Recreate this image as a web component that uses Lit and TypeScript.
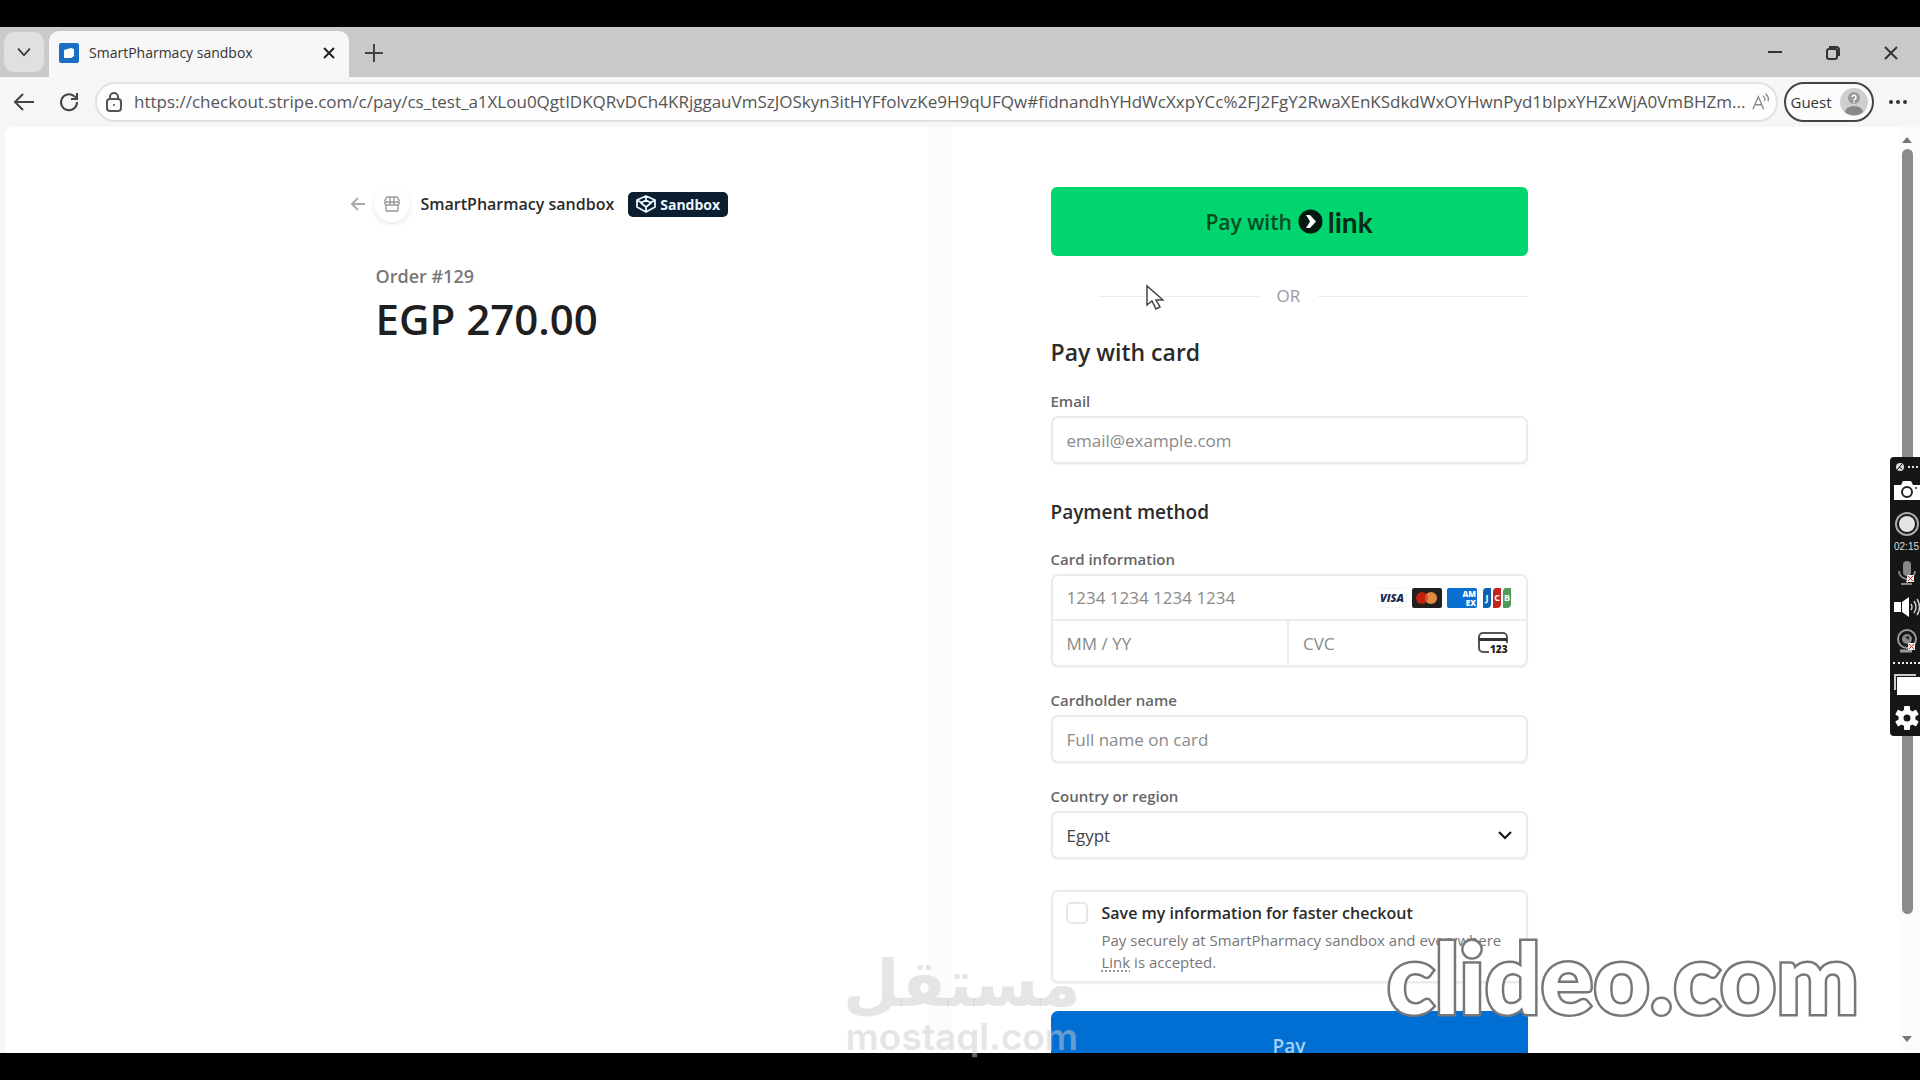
import { LitElement, html, svg, css } from "lit";
import { customElement } from "lit/decorators.js";

const base = css`
  *, *::before, *::after { box-sizing: border-box; }
  svg { display: block; flex: none; }
  button, input, select { font: inherit; color: inherit; margin: 0; }
  button { border: 0; background: none; padding: 0; display: flex; align-items: center; justify-content: center; }
  h1, h2, h3, p { margin: 0; }
`;

@customElement("browser-chrome")
class BrowserChrome extends LitElement {
  static styles = [base, css`
    :host { display: block; color: #333; }
    .tabs { display: flex; align-items: flex-end; height: 50px; padding: 0 0 0 4px; background: #c9c9c9; }
    .list { width: 40px; height: 40px; margin: 0 5px 5px 0; border-radius: 10px; background: #e0e0e0; }
    .tab { display: flex; align-items: center; width: 300px; height: 46px; padding: 0 10px 3px; border-radius: 10px 10px 0 0; background: #f7f7f7; }
    .title { flex: 1; margin-left: 10px; font-size: 14px; line-height: 20px; white-space: nowrap; }
    .plus { width: 50px; height: 46px; padding-bottom: 3px; }
    .window { display: flex; margin-left: auto; height: 46px; padding-bottom: 3px; }
    .window button { width: 58px; }
    .bar { display: flex; align-items: center; height: 50px; padding: 0 12px 1px; background: #f6f6f6; }
    .nav { width: 46px; height: 40px; justify-content: flex-start; }
    .nav.reload { width: 37px; }
    .address { display: flex; align-items: center; flex: 1; min-width: 0; height: 40px; padding: 0 6px 0 8px; border: 2px solid #e2e2e2; border-radius: 20px; background: #fdfdfd; }
    .url { flex: 1; min-width: 0; height: 24px; margin: 0 0 0 11px; padding: 0; border: 0; outline: 0; background: none; font-size: 17px; color: #555; text-overflow: ellipsis; }
    .guest { gap: 8px; height: 40px; width: 90px; margin: 0 14px 0 6px; border: 2px solid #444; border-radius: 20px; background: #fcfcfc; font-size: 15px; }
  `];
  render() {
    return html`
      <div class="tabs">
        <button class="list" aria-label="Tab list"><svg width="16" height="10" viewBox="0 0 18 12" fill="none" stroke="#333" stroke-width="2"><path d="M2 2l7 8 7-8" /></svg></button>
        <div class="tab">
          <svg width="20" height="20" viewBox="0 0 20 20"><rect width="20" height="20" rx="2" fill="#1a6fc4" /><path d="M5 7l7-2 3 1v7l-3 2H5z" fill="#fff" /></svg>
          <span class="title">SmartPharmacy sandbox</span>
          <button aria-label="Close tab"><svg width="20" height="20" viewBox="0 0 20 20" stroke="#222" stroke-width="2"><path d="M5 5l10 10M15 5L5 15" /></svg></button>
        </div>
        <button class="plus" aria-label="New tab"><svg width="20" height="20" viewBox="0 0 20 20" stroke="#444" stroke-width="2"><path d="M10 1v18M1 10h18" /></svg></button>
        <div class="window">
          <button aria-label="Minimize"><svg width="14" height="14" viewBox="0 0 14 14" stroke="#333" stroke-width="2"><path d="M0 6h14" /></svg></button>
          <button aria-label="Restore"><svg width="14" height="14" viewBox="0 0 14 14" fill="none" stroke="#333" stroke-width="2"><rect x="1" y="3" width="10" height="10" rx="2" /><path d="M3 1h7a3 3 0 0 1 3 3v6" /></svg></button>
          <button aria-label="Close"><svg width="14" height="14" viewBox="0 0 14 14" stroke="#333" stroke-width="2"><path d="M1 1l12 12M13 1L1 13" /></svg></button>
        </div>
      </div>
      <div class="bar">
        <button class="nav" aria-label="Back"><svg width="24" height="20" viewBox="0 0 24 20" fill="none" stroke="#444" stroke-width="2"><path d="M22 10H3M11 2l-8 8 8 8" /></svg></button>
        <button class="nav reload" aria-label="Reload"><svg width="22" height="22" viewBox="0 0 22 22" fill="none" stroke="#444" stroke-width="2"><path d="M19 11a8 8 0 1 1-3-6l3 2M19 2v6h-6" /></svg></button>
        <div class="address">
          <svg width="18" height="20" viewBox="0 0 18 20" fill="none" stroke="#555" stroke-width="2"><rect x="2" y="7" width="14" height="12" rx="3" /><path d="M5 7V5a4 4 0 0 1 8 0v2" /><circle cx="9" cy="13" r="1" fill="#555" stroke="none" /></svg>
          <input class="url" aria-label="Address" .value=${"https://checkout.stripe.com/c/pay/cs_test_a1XLou0QgtIDKQRvDCh4KRjggauVmSzJOSkyn3itHYFfolvzKe9H9qUFQw#fidnandhYHdWcXxpYCc%2FJ2FgY2RwaXEnKSdkdWxOYHwnPyd1blpxYHZxWjA0VmBHZm..."} />
          <svg width="18" height="18" viewBox="0 0 20 20" fill="none" stroke="#888" stroke-width="1.5"><path d="M1 18L7 4l6 14M3 13h8M12 3q3 2 2 6M15 1q4 3 3 8" /></svg>
        </div>
        <button class="guest">Guest
          <svg width="28" height="28" viewBox="0 0 28 28"><circle cx="14" cy="14" r="14" fill="#cfcfcf" /><path d="M5 24a9 6 0 0 1 18 0 14 14 0 0 1-18 0z" fill="#888" /><circle cx="14" cy="10" r="6" fill="#999" /><path d="M12 9a2 2 0 1 1 3 2l-1 1v1M14 14v1" fill="none" stroke="#fff" stroke-width="1.5" /></svg>
        </button>
        <button aria-label="Settings and more"><svg width="20" height="6" viewBox="0 0 20 6" fill="#333"><circle cx="3" cy="3" r="2" /><circle cx="10" cy="3" r="2" /><circle cx="17" cy="3" r="2" /></svg></button>
      </div>`;
  }
}

const brands = html`
  <svg width="30" height="20" viewBox="0 0 30 20" role="img" aria-label="Visa"><rect x="0.5" y="0.5" width="29" height="19" rx="2" fill="#fff" stroke="#f4f4f4" /><text x="15" y="14" text-anchor="middle" font-family="Open Sans, sans-serif" font-size="11" font-weight="800" font-style="italic" fill="#1c2a52">VISA</text></svg>
  <svg width="30" height="20" viewBox="0 0 30 20" role="img" aria-label="Mastercard"><rect width="30" height="20" rx="2" fill="#20201f" /><circle cx="10" cy="10" r="6" fill="#c1200f" /><circle cx="19" cy="10" r="6" fill="#e58a45" /><path d="M14.5 6a6 6 0 0 1 0 8 6 6 0 0 1 0-8z" fill="#d4502c" /></svg>
  <svg width="30" height="20" viewBox="0 0 30 20" role="img" aria-label="American Express"><rect width="30" height="20" rx="2" fill="#0a6fd0" /><g font-family="Open Sans, sans-serif" font-size="8" font-weight="800" fill="#fff" text-anchor="end"><text x="29" y="9">AM</text><text x="29" y="18">EX</text></g></svg>
  <svg width="30" height="20" viewBox="0 0 30 20" role="img" aria-label="JCB">
    <path d="M3 0h6v16a4 4 0 0 1-4 4H1V4a4 4 0 0 1 2-4z" fill="#0d63ad" /><path d="M13 0h6v16a4 4 0 0 1-4 4h-4V4a4 4 0 0 1 2-4z" fill="#c3271b" /><path d="M23 0h6v16a4 4 0 0 1-4 4h-4V4a4 4 0 0 1 2-4z" fill="#4d9c59" />
    <g font-family="Open Sans, sans-serif" font-size="9" font-weight="700" fill="#fff" text-anchor="middle"><text x="5" y="13">J</text><text x="15" y="13">C</text><text x="25" y="13">B</text></g>
  </svg>`;

@customElement("checkout-page")
class CheckoutPage extends LitElement {
  static styles = [base, css`
    :host { display: flex; min-height: 0; overflow: hidden; margin: 0 0 0 5px; background: #fff; color: #2b2b2b; border-top-left-radius: 8px; }
    .page { flex: 1; display: grid; grid-template-columns: minmax(0, 477px) minmax(0, 477px); column-gap: 198px; justify-content: center; align-items: start;
      background: linear-gradient(90deg, transparent calc(50% - 24px), #fbfcfc calc(50% - 24px), #fbfcfc 50%, transparent 50%); }
    .summary { padding-top: 58px; }
    .merchant { display: flex; align-items: center; height: 38px; margin-left: -26px; }
    .shop { display: grid; place-items: center; width: 36px; height: 36px; margin: 0 11px 0 9px; border-radius: 50%; box-shadow: 0 2px 5px #00000018; }
    .name { font-size: 16px; font-weight: 600; line-height: 24px; white-space: nowrap; }
    .badge { display: flex; align-items: center; gap: 4px; height: 25px; margin-left: 14px; padding: 0 8px; border-radius: 5px; background: #0c1f31; color: #e8f5ff; font-size: 14px; font-weight: 700; }
    .order { margin-top: 39px; font-size: 18px; font-weight: 600; line-height: 28px; color: #777; }
    .total { margin-top: 3px; font-size: 42px; font-weight: 600; line-height: 52px; color: #1f1f1f; white-space: nowrap; }
    .form { display: flex; flex-direction: column; padding-top: 60px; }
    .link { flex: none; gap: 6px; height: 69px; border-radius: 6px; background: #00d570; color: #064d24; font-size: 21px; font-weight: 600; }
    .brand { display: flex; align-items: center; gap: 5px; color: #062b16; font-size: 28px; font-weight: 700; line-height: 32px; font-family: Lato, "Open Sans", sans-serif; }
    .or { display: flex; align-items: center; gap: 18px; margin-top: 28px; font-size: 17px; line-height: 24px; color: #999; }
    .or::before, .or::after { content: ""; flex: 1; height: 1px; background: #ececec; }
    .or::before { flex: 0 1 160px; margin-left: 48px; }
    .heading { margin-top: 28px; font-size: 23px; font-weight: 600; line-height: 32px; }
    .method { margin-top: 34px; font-size: 19px; font-weight: 600; line-height: 28px; }
    .field { display: flex; flex-direction: column; gap: 5px; margin-top: 23px; }
    .label { font-size: 15px; font-weight: 600; line-height: 20px; color: #666; }
    .box { width: 100%; height: 48px; padding: 0 14px; border: 2px solid #ebebeb; border-radius: 7px; background: #fff; box-shadow: 0 1px 2px #0000000f; font-size: 17px; color: #444; outline: 0; }
    .box::placeholder, .cell input::placeholder { color: #8a8a8a; opacity: 1; }
    .card { display: grid; grid-template-columns: minmax(0, 1fr) minmax(0, 1fr); border: 2px solid #ebebeb; border-radius: 7px; box-shadow: 0 1px 2px #0000000f; }
    .cell { display: flex; align-items: center; gap: 5px; min-width: 0; height: 44px; padding: 0 14px; font-size: 17px; }
    .cell input { flex: 1; min-width: 0; padding: 0; border: 0; outline: 0; background: none; }
    .cell.number { grid-column: 1 / 3; height: 45px; border-bottom: 2px solid #ebebeb; }
    .cell.expiry { border-right: 2px solid #ebebeb; }
    .pick { display: grid; align-items: center; }
    .pick > * { grid-area: 1 / 1; }
    .pick select { appearance: none; }
    .pick svg { justify-self: end; margin-right: 16px; pointer-events: none; }
    .save { display: grid; grid-template-columns: 22px 1fr; column-gap: 14px; margin-top: 31px; padding: 10px 12px 8px 13px; border: 2px solid #ebebeb; border-radius: 7px; box-shadow: 0 1px 2px #0000000f; }
    .save input { appearance: none; width: 22px; height: 22px; border: 2px solid #e6e6e6; border-radius: 5px; background: #fff; }
    .save label { font-size: 16px; font-weight: 600; line-height: 22px; white-space: nowrap; }
    .note { grid-column: 2; margin-top: 5px; font-size: 15px; line-height: 22px; color: #777; }
    .note a { color: inherit; text-decoration: underline dotted; text-underline-offset: 3px; }
    .pay { flex: none; height: 69px; margin-top: 28px; border-radius: 7px; background: #006fd3; color: #a9d0f2; font-size: 19px; font-weight: 600; }
    .scroll { display: flex; flex-direction: column; align-items: center; gap: 6px; width: 22px; padding: 10px 4px 11px 0; background: #fcfcfc; }
    .thumb { width: 11px; flex: 0 1 765px; border-radius: 6px; background: #8b8b8b; }
    .scroll svg:last-child { margin-top: auto; }
  `];
  render() {
    return html`
      <main class="page">
        <section class="summary">
          <div class="merchant">
            <svg width="15" height="14" viewBox="0 0 15 14" fill="none" stroke="#aaa" stroke-width="2"><path d="M15 7H2M8 1L2 7l6 6" /></svg>
            <span class="shop"><svg width="16" height="16" viewBox="0 0 16 16" fill="none" stroke="#999" stroke-width="1.4"><path d="M3 1h10l2 3v4a1 1 0 0 1-1 1H2a1 1 0 0 1-1-1V4zM6 1v8M10 1v8M1 6h14M2 9v5a1 1 0 0 0 1 1h10a1 1 0 0 0 1-1V9" /></svg></span>
            <span class="name">SmartPharmacy sandbox</span>
            <span class="badge"><svg width="20" height="18" viewBox="0 0 20 18" fill="none" stroke="#e8f5ff" stroke-width="1.8" stroke-linejoin="round"><path d="M10 1l9 4v7l-9 5-9-5V5zM1 5l5 3M19 5l-5 3M10 12v5M10 5l5 3-5 4-5-4zM10 1v4" /></svg>Sandbox</span>
          </div>
          <p class="order">Order #129</p>
          <h1 class="total">EGP 270.00</h1>
        </section>
        <form class="form" @submit=${(e: Event) => e.preventDefault()}>
          <button class="link" type="button">Pay with
            <span class="brand"><svg width="25" height="25" viewBox="0 0 25 25"><circle cx="12.500" cy="12.500" r="12" fill="#041a10" /><path d="M8 6h4l6 6.500-6 6.500H8l4-6.500z" fill="#fff" /></svg>link</span>
          </button>
          <div class="or">OR</div>
          <h2 class="heading">Pay with card</h2>
          <div class="field"><label class="label" for="email">Email</label><input class="box" id="email" type="email" placeholder="email@example.com" /></div>
          <h3 class="method">Payment method</h3>
          <div class="field">
            <label class="label" for="number">Card information</label>
            <div class="card">
              <div class="cell number"><input id="number" placeholder="1234 1234 1234 1234" />${brands}</div>
              <div class="cell expiry"><input aria-label="Expiry date" placeholder="MM / YY" /></div>
              <div class="cell"><input aria-label="CVC" placeholder="CVC" />
                <svg width="34" height="23" viewBox="0 0 34 23"><path d="M11 20H5a4 4 0 0 1-4-4V5a4 4 0 0 1 4-4h20a4 4 0 0 1 4 4v6" fill="none" stroke="#555" stroke-width="2" /><path d="M1 6h28v3H1z" fill="#333" /><text x="12" y="21" font-family="Open Sans, sans-serif" font-size="10" font-weight="800" fill="#222">123</text></svg>
              </div>
            </div>
          </div>
          <div class="field"><label class="label" for="holder">Cardholder name</label><input class="box" id="holder" placeholder="Full name on card" /></div>
          <div class="field">
            <label class="label" for="country">Country or region</label>
            <div class="pick"><select class="box" id="country"><option>Egypt</option></select><svg width="14" height="9" viewBox="0 0 14 9" fill="none" stroke="#111" stroke-width="2"><path d="M1 1l6 6 6-6" /></svg></div>
          </div>
          <div class="save">
            <input type="checkbox" id="save" /><label for="save">Save my information for faster checkout</label>
            <p class="note">Pay securely at SmartPharmacy sandbox and everywhere <a href="#link">Link</a> is accepted.</p>
          </div>
          <button class="pay">Pay</button>
        </form>
      </main>
      <div class="scroll">
        <svg width="10" height="6" viewBox="0 0 10 6" fill="#777"><path d="M5 0l5 6H0z" /></svg>
        <div class="thumb"></div>
        <svg width="10" height="6" viewBox="0 0 10 6" fill="#777"><path d="M5 6l5-6H0z" /></svg>
      </div>`;
  }
}

const teeth = [0, 60, 120, 180, 240, 300].map((a) => svg`<rect x="9" y="0" width="6" height="7" rx="1" transform="rotate(${a} 12 12)" />`);

@customElement("recorder-dock")
class RecorderDock extends LitElement {
  static styles = [base, css`
    :host { display: flex; flex-direction: column; align-items: center; width: 30px; padding: 4px 0 6px 3px; overflow: hidden; border-radius: 4px 0 0 4px; background: #161616; color: #ddd; }
    .time { font-size: 10px; line-height: 14px; margin: 3px 0 6px; font-family: "Liberation Sans", sans-serif; }
    button { flex: none; }
    .gap { margin-bottom: 10px; }
    .top { margin: 1px 0 9px; }
    .dots { width: 100%; border-top: 2px dotted #eee; margin: 8px 0 10px; }
  `];
  render() {
    return html`
      <svg class="top" width="26" height="10" viewBox="0 0 26 10"><circle cx="6" cy="5" r="4" fill="#ddd" /><path d="M3 8l5-6M5 5l3 2" stroke="#161616" /><g fill="#ddd"><rect x="14" y="4" width="2" height="2" /><rect x="18" y="4" width="2" height="2" /><rect x="22" y="4" width="2" height="2" /></g></svg>
      <button class="gap" aria-label="Screenshot"><svg width="26" height="20" viewBox="0 0 26 20"><path d="M0 4h7l2-4h8l2 4h7v15H0z" fill="#fff" /><circle cx="13" cy="11" r="5" fill="none" stroke="#222" stroke-width="2" /><circle cx="22" cy="7" r="1" fill="#222" /></svg></button>
      <button aria-label="Record"><svg width="26" height="26" viewBox="0 0 26 26"><circle cx="13" cy="13" r="11" fill="none" stroke="#aaa" stroke-width="2" /><circle cx="13" cy="13" r="8" fill="#e4e4e4" /></svg></button>
      <span class="time">02:15</span>
      <button class="gap" aria-label="Microphone"><svg width="22" height="26" viewBox="0 0 22 26"><rect x="7" y="1" width="8" height="15" rx="4" fill="#888" /><path d="M3 11a8 8 0 0 0 16 0M11 19v5M5 24h11" fill="none" stroke="#888" stroke-width="2" /><path d="M11 15h7v7h-7z" fill="#eee" /><path d="M12 16l5 5M17 16l-5 5" stroke="#c33" /></svg></button>
      <button class="gap" aria-label="Speaker"><svg width="26" height="22" viewBox="0 0 26 22"><path d="M0 6h7v10H0zM8 6l7-5v20l-7-5z" fill="#fff" /><path d="M17 8q2 3 0 6M20 5q4 6 0 12M23 3q5 8 0 16" fill="none" stroke="#ccc" stroke-width="1.500" /></svg></button>
      <button aria-label="Webcam"><svg width="22" height="26" viewBox="0 0 22 26"><circle cx="11" cy="11" r="9" fill="none" stroke="#999" stroke-width="2" /><circle cx="11" cy="11" r="5" fill="#888" /><path d="M9 9l4-1v4z" fill="#222" /><path d="M4 23h12" stroke="#999" stroke-width="3" /><path d="M12 15h7v7h-7z" fill="#eee" /><path d="M13 16l5 5M18 16l-5 5" stroke="#c33" /></svg></button>
      <div class="dots"></div>
      <button class="gap" aria-label="Windows"><svg width="26" height="22" viewBox="0 0 26 22"><path d="M1 16V1h21" fill="none" stroke="#ccc" stroke-width="2" /><rect x="3" y="3" width="23" height="18" fill="#fff" /></svg></button>
      <button aria-label="Settings"><svg width="24" height="24" viewBox="0 0 24 24"><g fill="#fff">${teeth}</g><circle cx="12" cy="12" r="6" fill="none" stroke="#fff" stroke-width="5" /></svg></button>`;
  }
}

@customElement("app-root")
class AppRoot extends LitElement {
  static styles = [base, css`
    :host { position: relative; display: grid; grid-template-rows: auto minmax(0, 1fr); height: 100vh; overflow: hidden; padding: 27px 0; box-sizing: border-box; background: #000; font-family: "Open Sans", "Noto Sans", sans-serif; }
    .view { display: grid; min-height: 0; background: #f6f6f6; }
    .dock { position: absolute; right: 0; top: 457px; }
    .cursor { position: absolute; left: 1146px; top: 284px; }
    .clideo { position: absolute; right: 61px; bottom: 55px; font: 900 98px/1 Lato, sans-serif; color: #fff; -webkit-text-stroke: 5px #777; paint-order: stroke fill; }
    .mostaql { position: absolute; left: 843px; bottom: 21px; display: flex; flex-direction: column; align-items: center; color: #cccccc80; }
    .arabic { font: 700 65px/62px "DejaVu Sans", sans-serif; }
    .latin { font: 600 37px/44px Inter, sans-serif; }
  `];
  render() {
    return html`
      <browser-chrome></browser-chrome>
      <div class="view"><checkout-page></checkout-page></div>
      <svg class="cursor" width="18" height="27" viewBox="0 0 18 27"><path d="M1 2v19l5-4 4 8 4-2-4-7h7z" fill="#fff" stroke="#444" stroke-width="1.500" /></svg>
      <div class="mostaql"><span class="arabic" lang="ar" dir="rtl">مستقل</span><span class="latin">mostaql.com</span></div>
      <div class="clideo">clideo.com</div>
      <recorder-dock class="dock"></recorder-dock>`;
  }
}
